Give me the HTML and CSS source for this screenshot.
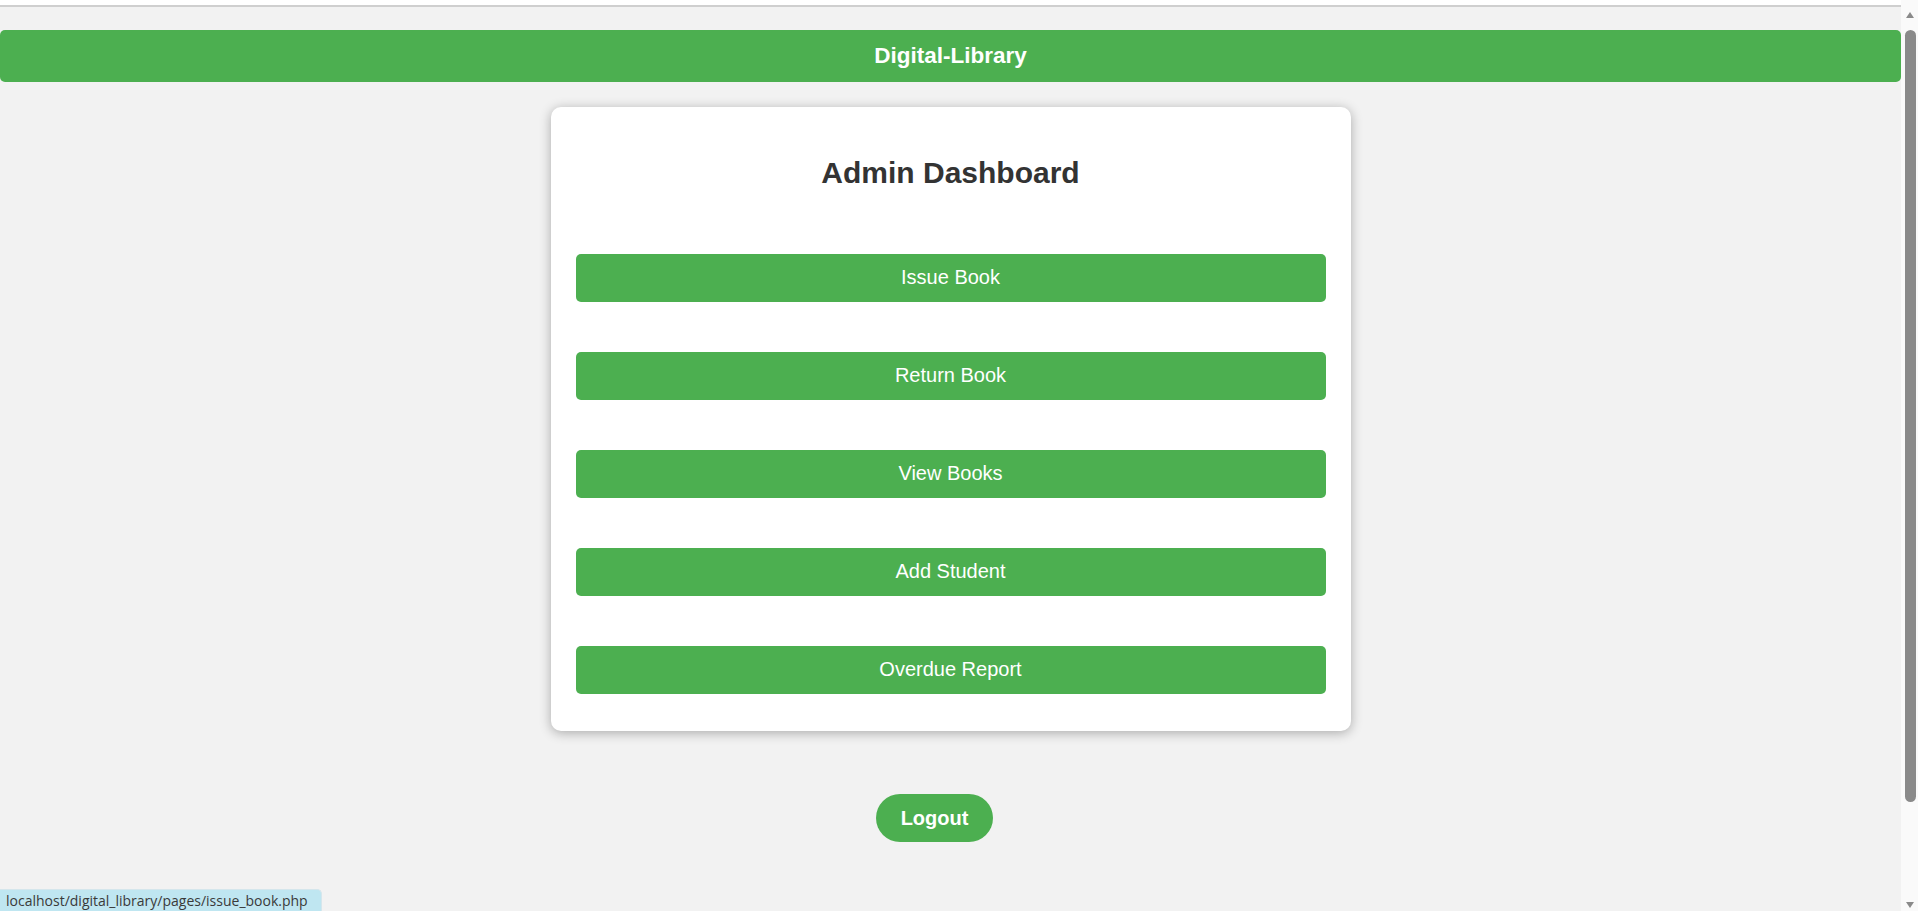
FILE: index.html
```html
<!DOCTYPE html>
<html lang="en">
<head>
<meta charset="utf-8">
<title>Admin Dashboard - Digital-Library</title>
<link rel="stylesheet" href="styles.css">
</head>
<body>
  <div class="page">
    <div class="top-strip"></div>
    <header class="site-header">Digital-Library</header>
    <main class="card">
      <h2 class="card-title">Admin Dashboard</h2>
      <nav class="actions">
        <a class="action-btn" href="#">Issue Book</a>
        <a class="action-btn" href="#">Return Book</a>
        <a class="action-btn" href="#">View Books</a>
        <a class="action-btn" href="#">Add Student</a>
        <a class="action-btn" href="#">Overdue Report</a>
      </nav>
    </main>
    <div class="logout-wrap">
      <a class="logout-btn" href="#">Logout</a>
    </div>
  </div>
  <div class="scrollbar">
    <div class="arrow-up"></div>
    <div class="thumb"></div>
    <div class="arrow-down"></div>
  </div>
  <div class="status-bubble">localhost/digital_library/pages/issue_book.php</div>
</body>
</html>
```
FILE: styles.css
```css
html, body {
  margin: 0;
  padding: 0;
}

body {
  height: 911px;
  overflow: hidden;
  display: flex;
  background: #f2f2f2;
  font-family: "Liberation Sans", Arial, sans-serif;
  position: relative;
}

.page {
  flex: 1;
  display: flex;
  flex-direction: column;
  min-width: 0;
}

.top-strip {
  height: 5px;
  background: #ffffff;
  border-bottom: 2px solid #cfcfcf;
}

.site-header {
  margin-top: 23px;
  height: 52px;
  line-height: 52px;
  background: #4caf50;
  color: #ffffff;
  font-weight: bold;
  font-size: 22.5px;
  text-align: center;
  border-radius: 5px;
}

.card {
  width: 800px;
  box-sizing: border-box;
  margin: 25px auto 0;
  padding: 25px 25px 37.5px;
  background: #ffffff;
  border-radius: 10px;
  box-shadow: 0 2px 12px rgba(0, 0, 0, 0.3);
}

.card-title {
  margin: 24px 0 63.5px;
  font-size: 30px;
  line-height: 34.5px;
  font-weight: bold;
  color: #333333;
  text-align: center;
}

.actions {
  display: flex;
  flex-direction: column;
  gap: 50.5px;
}

.action-btn {
  display: block;
  padding: 12.25px 0;
  line-height: 23px;
  font-size: 20px;
  color: #ffffff;
  background: #4caf50;
  text-align: center;
  text-decoration: none;
  border-radius: 5px;
}

.logout-wrap {
  margin-top: 63px;
  text-align: center;
  padding-right: 32px;
}

.logout-btn {
  display: inline-block;
  padding: 12.5px 25px;
  line-height: 23px;
  font-size: 20px;
  font-weight: bold;
  color: #ffffff;
  background: #4caf50;
  border-radius: 25px;
  text-decoration: none;
}

.scrollbar {
  width: 17px;
  flex: none;
  background: #fafafa;
  display: flex;
  flex-direction: column;
  align-items: center;
  padding-left: 1px;
  box-sizing: border-box;
}

.arrow-up {
  margin-top: 12px;
  width: 0;
  height: 0;
  border-left: 4.5px solid transparent;
  border-right: 4.5px solid transparent;
  border-bottom: 6px solid #8a8a8a;
}

.thumb {
  margin-top: 12px;
  width: 11px;
  height: 772px;
  background: #8a8a8a;
  border-radius: 6px;
}

.arrow-down {
  margin-top: auto;
  margin-bottom: 3px;
  width: 0;
  height: 0;
  border-left: 4.5px solid transparent;
  border-right: 4.5px solid transparent;
  border-top: 6px solid #8a8a8a;
}

.status-bubble {
  position: absolute;
  left: 0;
  bottom: 0;
  height: 22px;
  width: 322px;
  box-sizing: border-box;
  padding: 1px 0 0 6px;
  background: #bfe6f1;
  border-top: 1px solid #d5e6ec;
  border-right: 1px solid #d5e6ec;
  border-top-right-radius: 5px;
  font-family: "Open Sans", "Noto Sans", sans-serif;
  font-size: 14px;
  line-height: 20px;
  color: #3a3a3a;
  white-space: nowrap;
}
```
